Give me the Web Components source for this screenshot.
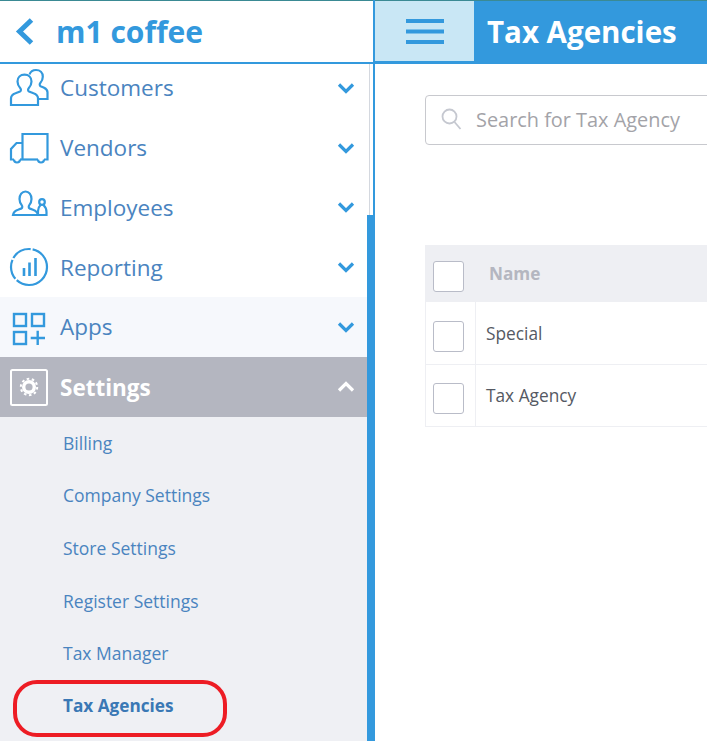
<!DOCTYPE html>
<html>
<head>
<meta charset="utf-8">
<title>Tax Agencies</title>
<style>
html, body { margin: 0; height: 100%; overflow: hidden; background: #fff; }
body { font-family: "Open Sans", "Liberation Sans", sans-serif; }
</style>
</head>
<body>

<app-shell>
  <side-bar slot="side">
    <nav-item label="Customers" icon="customers"></nav-item>
    <nav-item label="Vendors" icon="vendors"></nav-item>
    <nav-item label="Employees" icon="employees"></nav-item>
    <nav-item label="Reporting" icon="reporting"></nav-item>
    <nav-item label="Apps" icon="apps" tint></nav-item>
    <nav-item label="Settings" icon="settings" open></nav-item>
    <sub-item>Billing</sub-item>
    <sub-item>Company Settings</sub-item>
    <sub-item>Store Settings</sub-item>
    <sub-item>Register Settings</sub-item>
    <sub-item>Tax Manager</sub-item>
    <sub-item current>Tax Agencies</sub-item>
  </side-bar>
  <top-bar slot="top">Tax Agencies</top-bar>
  <search-box placeholder="Search for Tax Agency"></search-box>
  <agency-table>
    <agency-row>Special</agency-row>
    <agency-row>Tax Agency</agency-row>
  </agency-table>
</app-shell>

<script>
const icons = {
  customers: `<svg width="40" height="40" viewBox="0 0 40 40" fill="none" stroke="#3399dd" stroke-width="2.2">
    <path d="M2 37V30.500c0-2.800 1.500-4.300 4.500-5.300l4.500-1.700c1.200-.6 1.200-2.300.3-3.300C9.500 18.300 8.500 16 8.500 13.500c0-4.200 3-6.800 7-6.800s7 2.600 7 6.800c0 2.500-1 4.800-2.800 6.700-.9 1-.9 2.700.3 3.300l4.500 1.700c3 1 4.500 2.500 4.500 5.300V37z"/>
    <path d="M20.500 6.500c1-2.800 3.500-4.500 6.500-4.500 4 0 6.800 2.700 6.800 6.700 0 2.500-1 4.600-2.500 6.300-.9 1-.8 2.600.3 3.200l3 1.200c2.300 1 3.900 2.300 3.900 4.800V31h-9.500"/>
  </svg>`,
  vendors: `<svg width="40" height="40" viewBox="0 0 40 40" fill="none" stroke="#3399dd" stroke-width="2.2">
    <path d="M13.500 31.500V6h25v25.500H35"/>
    <path d="M13.500 15H7.500L2 21v10.500h3"/>
    <path d="M11 31.500h18"/>
    <path d="M5 31.500a3 3 0 0 0 6 0M29 31.500a3 3 0 0 0 6 0"/>
  </svg>`,
  employees: `<svg width="40" height="40" viewBox="0 0 40 40" fill="none" stroke="#3399dd" stroke-width="2.2">
    <path d="M4 28c.5-2.800 2-4.300 5-5.300l3.500-1.300c1-.7 1-2.300.2-3.300-1.400-1.700-2.200-3.700-2.200-6.100 0-4.300 2.500-7.500 6-7.500s6 3.200 6 7.500c0 2.400-.8 4.400-2.200 6.100-.8 1-.8 2.600.2 3.300l3.500 1.300c2.800 1 4.500 2.500 5 5.300z"/>
    <circle cx="33" cy="15" r="2.800"/>
    <path d="M31.500 18c-1.500 1.500-2.500 3.500-2.500 6v4h8.500v-3c0-3-1.500-5.500-3-7"/>
  </svg>`,
  reporting: `<svg width="40" height="40" viewBox="0 0 40 40" fill="none" stroke="#3399dd" stroke-width="2.2">
    <circle cx="20" cy="20" r="18" stroke-dasharray="41.500 2 20 2 20.500 2 25.100"/>
    <path d="M15 29v-8M20.500 29V15.500M26.500 29V11" stroke-width="2.600"/>
  </svg>`,
  apps: `<svg width="40" height="40" viewBox="0 0 40 40" fill="none" stroke="#3399dd" stroke-width="2.400">
    <rect x="5" y="7" width="12" height="12"/>
    <rect x="23" y="7" width="12" height="12"/>
    <rect x="5" y="25" width="12" height="12"/>
    <path d="M21.700 31H36M28.700 23.700V38"/>
  </svg>`,
  settings: `<svg width="40" height="40" viewBox="0 0 40 40" fill="none">
    <rect x="2" y="3" width="36" height="35" rx="1.500" stroke="#fff" stroke-width="2"/>
    <circle cx="20" cy="20" r="5.300" stroke="#fff" stroke-width="3.400"/>
    <circle cx="20" cy="20" r="8.200" stroke="#fff" stroke-width="2" stroke-dasharray="2.600 2.550"/>
  </svg>`
};

function chevron(up, colour) {
  const d = up ? 'M2 10.500 9 3.500l7 7' : 'M2 3.500l7 7 7-7';
  return `<svg width="18" height="14" viewBox="0 0 18 14" fill="none" stroke="${colour}" stroke-width="3.200"><path d="${d}"/></svg>`;
}

class AppShell extends HTMLElement {
  constructor() {
    super();
    this.attachShadow({ mode: 'open' }).innerHTML = `
    <style>
      :host { display: grid; grid-template-columns: 373px 2px 1fr; height: 741px; width: 707px; overflow: hidden; }
      .rule { background: #3399dd; }
      .main { min-width: 0; display: flex; flex-direction: column; }
      .body { padding: 31px 0 0 50px; display: flex; flex-direction: column; }
    </style>
    <slot name="side"></slot>
    <div class="rule"></div>
    <div class="main">
      <slot name="top"></slot>
      <div class="body"><slot></slot></div>
    </div>`;
  }
}

class SideBar extends HTMLElement {
  constructor() {
    super();
    this.attachShadow({ mode: 'open' }).innerHTML = `
    <style>
      :host { display: flex; flex-direction: column; height: 741px; min-width: 0; overflow: hidden; }
      .head { flex: none; height: 61px; border-top: 1px solid #3a8a94; border-bottom: 2px solid #3399dd;
        display: flex; align-items: center; gap: 22px; padding-left: 15px; }
      .title { font-size: 30px; font-weight: 700; color: #3399dd; line-height: 1; }
      .wrap { flex: 1; display: grid; grid-template-columns: 367px 6px; min-height: 0; }
      .list { overflow: hidden; min-height: 0; background: #eff0f4; }
      .inner { margin-top: -6px; }
      .track { position: relative; }
      .track::before { content: ""; position: absolute; left: 2px; top: 0; height: 151px; width: 1px; background: #d4d8df; }
      .thumb { position: absolute; left: 0; right: 0; top: 151px; bottom: 0; background: #3399dd; }
    </style>
    <div class="head">
      <svg width="19" height="27" viewBox="0 0 19 27" fill="none" stroke="#3399dd" stroke-width="5"><path d="M16.500 2 4.500 13.500 16.500 25"/></svg>
      <span class="title">m1 coffee</span>
    </div>
    <div class="wrap">
      <div class="list"><div class="inner"><slot></slot></div></div>
      <div class="track"><div class="thumb"></div></div>
    </div>`;
  }
}

class NavItem extends HTMLElement {
  constructor() {
    super();
    const open = this.hasAttribute('open');
    this.attachShadow({ mode: 'open' }).innerHTML = `
    <style>
      :host { display: flex; align-items: center; height: 59.750px; padding: 0 12px 0 9px; box-sizing: border-box;
        font-size: 22.500px; color: #4a84bf; background: #fff; }
      :host([tint]) { background: #f6f8fc; }
      :host([open]) { background: #b4b6c0; color: #fff; font-weight: 700; }
      :host([open]) .label { padding-top: 2px; }
      .icon { width: 40px; height: 40px; flex: none; margin-right: 11px; display: block; }
      .label { flex: 1; }
      .chev { display: flex; }
    </style>
    <span class="icon">${icons[this.getAttribute('icon')]}</span>
    <span class="label">${this.getAttribute('label')}</span>
    <span class="chev">${chevron(open, open ? '#fff' : '#3399dd')}</span>`;
  }
}

class SubItem extends HTMLElement {
  constructor() {
    super();
    this.attachShadow({ mode: 'open' }).innerHTML = `
    <style>
      :host { display: flex; align-items: center; height: 52.600px; padding-left: 63px; background: #eff0f4;
        font-size: 17.500px; color: #4a84bf; position: relative; }
      :host([current]) { font-weight: 700; color: #3a78b5; font-size: 17.200px; }
      .mark { display: none; position: absolute; left: 13px; top: 1px; width: 214px; height: 57px;
        border: 4.500px solid #ed1c24; border-radius: 24px; box-sizing: border-box; }
      :host([current]) .mark { display: block; }
    </style>
    <slot></slot><span class="mark"></span>`;
  }
}

class TopBar extends HTMLElement {
  constructor() {
    super();
    this.attachShadow({ mode: 'open' }).innerHTML = `
    <style>
      :host { display: flex; height: 64px; background: #3399dd; border-top: 1px solid #3a8a94; box-sizing: border-box;
        align-items: stretch; color: #fff; font-size: 29.500px; font-weight: 700; }
      .menu { width: 99px; height: 60px; background: #c9e7f5; display: flex; align-items: center; justify-content: center; }
      .title { padding-left: 13px; align-self: center; padding-bottom: 1px; line-height: 1; }
    </style>
    <div class="menu">
      <svg width="38" height="25" viewBox="0 0 38 25" fill="#3399dd"><rect y="0" width="38" height="4"/><rect y="10.500" width="38" height="4"/><rect y="21" width="38" height="4"/></svg>
    </div>
    <div class="title"><slot></slot></div>`;
  }
}

class SearchBox extends HTMLElement {
  constructor() {
    super();
    this.attachShadow({ mode: 'open' }).innerHTML = `
    <style>
      :host { display: flex; align-items: center; height: 50px; width: 400px; box-sizing: border-box; flex: none;
        border: 1px solid #c8c9ce; border-radius: 4px; padding: 0 0 2px 15px; gap: 14px; background: #fff;
        font-size: 19.900px; color: #a3a3a8; }
      svg { flex: none; }
      span { white-space: nowrap; }
    </style>
    <svg width="21" height="22" viewBox="0 0 21 22" fill="none" stroke="#c5c8d0" stroke-width="1.800"><circle cx="8.500" cy="8.500" r="7"/><path d="M13.500 14l6 7"/></svg>
    <span>${this.getAttribute('placeholder')}</span>`;
  }
}

class CheckBox extends HTMLElement {
  constructor() {
    super();
    this.attachShadow({ mode: 'open' }).innerHTML = `
    <style>
      :host { display: block; width: 31px; height: 31px; box-sizing: border-box; flex: none; margin-top: 6px;
        border: 1px solid #b9bcc8; border-radius: 3px; background: #fff; }
    </style>`;
  }
}

class AgencyTable extends HTMLElement {
  constructor() {
    super();
    this.attachShadow({ mode: 'open' }).innerHTML = `
    <style>
      :host { display: block; margin-top: 100px; width: 400px; flex: none; }
      .head { display: flex; align-items: center; height: 57px; background: #eeeff3; padding-left: 8px;
        font-size: 17.200px; font-weight: 700; color: #b4b6c0; gap: 25px; }
    </style>
    <div class="head"><check-box></check-box><span>Name</span></div>
    <slot></slot>`;
  }
}

class AgencyRow extends HTMLElement {
  constructor() {
    super();
    this.attachShadow({ mode: 'open' }).innerHTML = `
    <style>
      :host { display: flex; height: 62px; box-sizing: border-box; border-bottom: 1px solid #eeeff3;
        border-left: 1px solid #eeeff3; font-size: 17.300px; color: #555963; }
      :host(:first-of-type) { height: 63px; }
      .tick { width: 50px; border-right: 1px solid #eeeff3; display: flex; align-items: center; padding-left: 7px; box-sizing: border-box; flex: none; }
      .name { display: flex; align-items: center; padding-left: 10px; }
    </style>
    <div class="tick"><check-box></check-box></div>
    <div class="name"><slot></slot></div>`;
  }
}

customElements.define('check-box', CheckBox);
customElements.define('app-shell', AppShell);
customElements.define('side-bar', SideBar);
customElements.define('nav-item', NavItem);
customElements.define('sub-item', SubItem);
customElements.define('top-bar', TopBar);
customElements.define('search-box', SearchBox);
customElements.define('agency-table', AgencyTable);
customElements.define('agency-row', AgencyRow);
</script>
</body>
</html>
